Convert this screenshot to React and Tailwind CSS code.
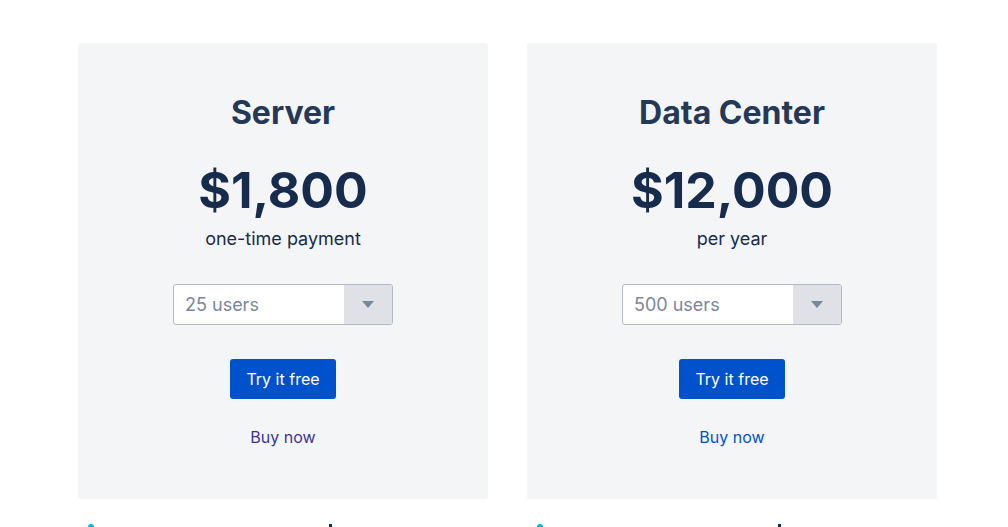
import React from 'react';

const plans = [
    { name: 'Server', price: '$1,800', term: 'one-time payment', users: '25 users', linkColor: 'text-[#403294]' },
    { name: 'Data Center', price: '$12,000', term: 'per year', users: '500 users', linkColor: 'text-[#0052cc]' },
];

function UserSelect({ value }) {
    return (
        <div className="flex w-[220px] h-[41px] rounded-[3px] border border-[#b3bac5] bg-white overflow-hidden">
            <div className="flex-1 flex items-center pl-[11px] text-[18px] text-[#7a869a]">{value}</div>
            <div className="w-[48px] flex items-center justify-center bg-[#dfe1e6]">
                <svg width="14" height="9" viewBox="0 0 14 9">
                    <path d="M1 1 L13 1 L7 8 Z" fill="#7a869a" />
                </svg>
            </div>
        </div>
    );
}

function PlanCard({ plan }) {
    return (
        <div className="w-[410px] h-[456px] rounded-[3px] bg-[#f4f5f7] flex flex-col items-center pt-[50px]">
            <h2 className="text-[32px] leading-10 font-bold text-[#253858]">{plan.name}</h2>
            <div className="mt-[27px] text-[50px] leading-[60px] font-bold text-[#172b4d]">{plan.price}</div>
            <p className="mt-[5px] text-[18px] leading-7 text-[#172b4d]">{plan.term}</p>
            <div className="mt-[31px]">
                <UserSelect value={plan.users} />
            </div>
            <button className="mt-[34px] h-[40px] w-[106px] rounded-[3px] bg-[#0052cc] text-white text-[16px]">
                Try it free
            </button>
            <a className={`mt-[26px] text-[16px] leading-6 ${plan.linkColor}`}>Buy now</a>
        </div>
    );
}

export default function App() {
    return (
        <div className="min-h-screen bg-white overflow-hidden" style={{ fontFamily: 'Inter, "Noto Sans", sans-serif' }}>
            <div className="flex gap-[39px] pl-[78px] pt-[43px]">
                {plans.map((p) => (
                    <PlanCard key={p.name} plan={p} />
                ))}
            </div>
            {/* Feature rows below the cards, mostly cut off by the window */}
            <div className="flex gap-[39px] pl-[78px] mt-[25px]">
                {plans.map((p) => (
                    <div key={p.name} className="w-[410px] flex justify-between px-[10px]">
                        <span className="block w-[6px] h-[6px] rounded-sm bg-[#00b8d9]" />
                        <span className="block w-[3px] h-[6px] mr-[146px] bg-[#172b4d]" />
                    </div>
                ))}
            </div>
        </div>
    );
}
